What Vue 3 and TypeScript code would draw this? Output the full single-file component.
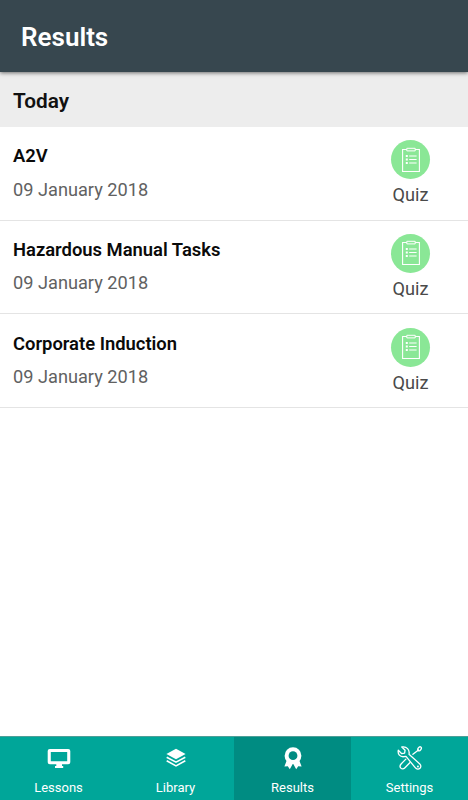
<script setup lang="ts">
import { ref } from 'vue'

interface Result {
  title: string
  date: string
  kind: string
}

type TabIcon = 'lessons' | 'library' | 'results' | 'settings'

interface Tab {
  label: string
  icon: TabIcon
}

const results: Result[] = [
  { title: 'A2V', date: '09 January 2018', kind: 'Quiz' },
  { title: 'Hazardous Manual Tasks', date: '09 January 2018', kind: 'Quiz' },
  { title: 'Corporate Induction', date: '09 January 2018', kind: 'Quiz' },
]

const tabs: Tab[] = [
  { label: 'Lessons', icon: 'lessons' },
  { label: 'Library', icon: 'library' },
  { label: 'Results', icon: 'results' },
  { label: 'Settings', icon: 'settings' },
]

const active = ref<TabIcon>('results')
</script>

<template>
  <div class="screen">
    <header class="top-bar">
      <h1>Results</h1>
    </header>

    <main class="content">
      <h2 class="section">Today</h2>
      <ul class="list">
        <li v-for="item in results" :key="item.title" class="row">
          <div class="info">
            <div class="title">{{ item.title }}</div>
            <div class="date">{{ item.date }}</div>
          </div>
          <div class="kind">
            <span class="badge">
              <svg width="20" height="26" viewBox="0 0 20 26" fill="none" stroke="#fff">
                <path d="M5.8 2.5H1.6V24.5H18.4V2.5H14.2" stroke-width="1.1" />
                <path d="M5.8 1.3H14.2V3.9H5.8Z" stroke-width="1" />
                <path d="M8.2 9H15.6M8.2 12.5H15.6M8.2 16H15.6" stroke-width="1.1" />
                <path d="M4.8 9H6.8M4.8 12.5H6.8M4.8 16H6.8" stroke-width="1.9" />
              </svg>
            </span>
            <span class="kind-label">{{ item.kind }}</span>
          </div>
        </li>
      </ul>
    </main>

    <nav class="tabs">
      <button
        v-for="tab in tabs"
        :key="tab.icon"
        class="tab"
        :class="{ active: tab.icon === active }"
        @click="active = tab.icon"
      >
        <svg v-if="tab.icon === 'lessons'" class="icon" viewBox="0 0 26 26" fill="#fff">
          <path
            fill-rule="evenodd"
            d="M3.8 3.9H22.2Q24.3 3.9 24.3 6V17Q24.3 19.2 22.2 19.2H16V21H17.2V22.9H9V21H10.3V19.2H3.8Q1.7 19.2 1.7 17V6Q1.7 3.9 3.8 3.9ZM4.8 7V16.2H21.2V7Z"
          />
        </svg>
        <svg v-else-if="tab.icon === 'library'" class="icon" viewBox="0 0 26 26">
          <path fill="#fff" d="M13 3.8L22.6 9L13 14.2L3.4 9Z" />
          <path
            fill="none"
            stroke="#fff"
            stroke-width="1.6"
            d="M3.7 12.2L13 17.2L22.3 12.2M3.7 15.8L13 20.9L22.3 15.8"
          />
        </svg>
        <svg v-else-if="tab.icon === 'results'" class="icon" viewBox="0 0 26 26">
          <path fill="#fff" d="M7.3 14L4.4 21.4L7.8 21.2L9.8 24.2L13 18.6L16.2 24.2L18.2 21.2L21.6 21.4L18.7 14Z" />
          <circle cx="13" cy="10.7" r="8.4" fill="#fff" />
          <circle cx="13" cy="10.7" r="4.4" class="medal-center" />
        </svg>
        <svg
          v-else
          class="icon"
          viewBox="0 0 26 26"
          fill="none"
          stroke="#fff"
          stroke-width="1.3"
          stroke-linejoin="round"
          stroke-linecap="round"
        >
          <path
            d="M4.8 2L8.1 5.2L7.6 8.1L4.8 8.7L1.3 5.3C.5 9.4 3 12.1 6.9 11.7L9 11.3L18.2 22.7C19.7 24.5 21.7 24.5 23 23.2C24.2 21.9 24.1 20.1 22.8 18.9L12 9.3C13 4.9 9.6.9 4.8 2Z"
          />
          <path d="M20.9 21.5H21" stroke-width="1.8" />
          <path d="M15.9 9.3L21.5 5" />
          <ellipse cx="22.6" cy="3.8" rx="1.5" ry="2.2" transform="rotate(35 22.6 3.8)" />
          <path d="M8.9 14.1L4.3 18.7C2.8 20.4 2.8 22.1 3.8 23.1C4.9 24.2 6.5 24.2 7.7 23L12.8 17.8" />
        </svg>
        <span class="tab-label">{{ tab.label }}</span>
      </button>
    </nav>
  </div>
</template>

<style>
body {
  margin: 0;
}
</style>

<style scoped>
.screen {
  display: flex;
  flex-direction: column;
  height: 100vh;
  overflow: hidden;
  background: #fff;
  font-family: Roboto, sans-serif;
}
.top-bar {
  position: relative;
  z-index: 1;
  flex: none;
  display: flex;
  align-items: center;
  box-sizing: border-box;
  height: 72px;
  padding: 2px 21px 0;
  background: #37474f;
  box-shadow: 0 1px 4px rgba(0, 0, 0, 0.55);
}
h1 {
  margin: 0;
  color: #fff;
  font-size: 26px;
  font-weight: 600;
  line-height: 32px;
}
.content {
  flex: 1;
  min-height: 0;
}
.section {
  box-sizing: border-box;
  height: 55px;
  margin: 0;
  padding: 3px 13px 0;
  background: #ededed;
  color: #111;
  font-size: 20.8px;
  font-weight: 600;
  line-height: 52px;
}
.list {
  margin: 0;
  padding: 0;
  list-style: none;
}
.row {
  display: flex;
  justify-content: space-between;
  box-sizing: border-box;
  height: 93.67px;
  padding: 13.2px 38px 0 13px;
  border-bottom: 1px solid #e4e4e4;
}
.info {
  padding-top: 4px;
}
.title {
  color: #0a0a0a;
  font-size: 18.4px;
  font-weight: 600;
  line-height: 24px;
}
.date {
  margin-top: 9.5px;
  color: #616161;
  font-size: 18.2px;
  line-height: 24px;
}
.kind {
  display: flex;
  flex-direction: column;
  align-items: center;
}
.badge {
  display: flex;
  align-items: center;
  justify-content: center;
  width: 39px;
  height: 39px;
  border-radius: 50%;
  background: #8ae796;
}
.kind-label {
  margin-top: 4.3px;
  color: #4a4a4a;
  font-size: 18.2px;
  line-height: 24px;
}
.tabs {
  flex: none;
  display: grid;
  grid-template-columns: repeat(4, 1fr);
  box-sizing: border-box;
  height: 64px;
  border-top: 1px solid #4d9f98;
  background: #00a699;
}
.tab {
  display: flex;
  flex-direction: column;
  align-items: center;
  margin: 0;
  padding: 8px 0 0;
  border: 0;
  background: none;
  color: #fff;
  font: inherit;
}
.tab.active {
  background: #008c82;
}
.icon {
  width: 26px;
  height: 26px;
}
.medal-center {
  fill: #008c82;
}
.tab-label {
  margin-top: 9px;
  font-size: 13px;
  line-height: 16px;
}
</style>
